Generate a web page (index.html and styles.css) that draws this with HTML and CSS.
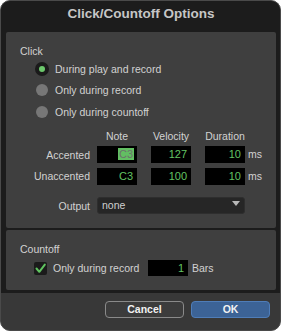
FILE: index.html
```html
<!DOCTYPE html>
<html lang="en">
<head>
  <meta charset="UTF-8" />
  <title>Click/Countoff Options</title>
  <link rel="stylesheet" href="styles.css">
</head>
<body>

  <div class="window">
    <div class="top">
      <div class="title">Click/Countoff Options</div>

      <!-- click section -->
      <section class="panel click-panel">
        <div class="section-label">Click</div>
        <div class="radios">
          <div class="radio-row">
            <span class="radio on"></span>
            <span>During play and record</span>
          </div>
          <div class="radio-row">
            <span class="radio"></span>
            <span>Only during record</span>
          </div>
          <div class="radio-row">
            <span class="radio"></span>
            <span>Only during countoff</span>
          </div>
        </div>

        <div class="note-grid">
          <span></span>
          <span class="col-head">Note</span>
          <span class="col-head">Velocity</span>
          <span class="col-head">Duration</span>
          <span></span>

          <span class="row-label">Accented</span>
          <span class="field"><span class="selected">C3</span></span>
          <span class="field">127</span>
          <span class="field">10</span>
          <span class="unit">ms</span>

          <span class="row-label">Unaccented</span>
          <span class="field">C3</span>
          <span class="field">100</span>
          <span class="field">10</span>
          <span class="unit">ms</span>
        </div>

        <div class="output-row">
          <span class="row-label">Output</span>
          <div class="select">
            <span>none</span>
            <span class="arrow"></span>
          </div>
        </div>
      </section>

      <!-- countoff section -->
      <section class="panel countoff-panel">
        <div class="section-label">Countoff</div>
        <div class="countoff-row">
          <span class="checkbox">
            <svg width="13" height="13" viewBox="0 0 13 13">
              <polyline points="2.5,6.5 5.3,9.8 10.8,2.6" fill="none" stroke="#5fc35f" stroke-width="2" stroke-linecap="round" stroke-linejoin="round"/>
            </svg>
          </span>
          <span class="check-text">Only during record</span>
          <span class="field">1</span>
          <span class="unit">Bars</span>
        </div>
      </section>
    </div>

    <div class="buttons">
      <button class="btn">Cancel</button>
      <button class="btn primary">OK</button>
    </div>
  </div>

</body>
</html>
```

FILE: styles.css
```css
body {
  margin: 0;
  background: #fff;
  font-family: 'Liberation Sans', Arial, sans-serif;
  font-size: 10.5px;
  color: #d2d2d2;
}
.window {
  width: 281px;
  height: 331px;
  box-sizing: border-box;
  border: 1px solid #4a4a4a;
  border-radius: 10px;
  background: #383838;
  overflow: hidden;
  display: flex;
  flex-direction: column;
}
.top {
  background: #1c1c1c;
  padding: 0 4px 3px 5px;
}
.title {
  height: 31px;
  line-height: 26px;
  text-align: center;
  font-weight: bold;
  font-size: 13.5px;
  color: #c6c6c6;
}
.panel {
  background: #3f3f3f;
  border-radius: 2px;
  padding: 12px 14px 14px;
}
.click-panel { margin-bottom: 2px; }
.section-label {
  line-height: 14px;
}
.radios {
  padding-left: 15px;
}
.radio-row {
  height: 21px;
  display: flex;
  align-items: center;
  gap: 6px;
}
.radio-row:nth-child(2) { height: 22px; }
.radio {
  width: 12px;
  height: 12px;
  border-radius: 50%;
  background: #777;
  margin: 0 1px;
}
.radio.on {
  width: 14px;
  height: 14px;
  margin: 0;
  background: #1a1a1a;
  display: flex;
  align-items: center;
  justify-content: center;
}
.radio.on::after {
  content: '';
  width: 6px;
  height: 6px;
  border-radius: 50%;
  background: #6cc86c;
}

/* note / velocity / duration table */
.note-grid {
  margin-top: 7px;
  display: grid;
  grid-template-columns: 77px 54px 54px 43px auto;
  grid-template-rows: 14px 17px 17px;
  row-gap: 3px;
  align-items: center;
}
.note-grid .field:nth-child(n+11),
.note-grid .row-label:nth-child(n+11),
.note-grid .unit:nth-child(n+11) { margin-top: 3px; }
.col-head {
  width: 40px;
  text-align: center;
  line-height: 14px;
}
.row-label {
  text-align: right;
  padding-right: 7px;
}
.field {
  width: 40px;
  height: 17px;
  box-sizing: border-box;
  background: #000;
  color: #63c463;
  text-align: right;
  padding-right: 4px;
  line-height: 17px;
  font-size: 11px;
}
.selected {
  display: inline-block;
  background: #62bf62;
  color: #6c736c;
  line-height: 12px;
  padding: 0 1px;
  margin-right: -1px;
}
.unit {
  line-height: 17px;
}

.output-row {
  margin-top: 14px;
  display: grid;
  grid-template-columns: 77px 148px;
  align-items: center;
}
.select {
  height: 17px;
  box-sizing: border-box;
  background: #262626;
  border: 1px solid #2e2e2e;
  border-radius: 3px;
  padding-left: 4px;
  line-height: 15px;
  color: #d0d0d0;
  position: relative;
}
.arrow {
  position: absolute;
  right: 4px;
  top: 3px;
  width: 0;
  height: 0;
  border-left: 4px solid transparent;
  border-right: 4px solid transparent;
  border-top: 5px solid #b8b8b8;
}

/* countoff */
.countoff-row {
  margin-top: 4px;
  padding-left: 14px;
  height: 16px;
  display: flex;
  align-items: center;
}
.checkbox {
  width: 13px;
  height: 13px;
  background: #1a1a1a;
  border-radius: 2px;
  display: flex;
}
.check-text {
  margin-left: 6px;
  width: 95px;
}
.countoff-row .field {
  height: 16px;
  line-height: 16px;
}
.countoff-row .unit {
  margin-left: 4px;
}

/* bottom buttons */
.buttons {
  flex: 1;
  display: flex;
  justify-content: flex-end;
  align-items: flex-start;
  gap: 7px;
  padding: 8px 10px 0 0;
}
.btn {
  width: 79px;
  height: 17px;
  box-sizing: border-box;
  border: 1px solid #8a8a8a;
  border-radius: 4px;
  background: #3c3c3c;
  color: #f2f2f2;
  font-family: 'Liberation Sans', Arial, sans-serif;
  font-weight: bold;
  font-size: 10.5px;
  padding: 0;
  line-height: 15px;
}
.btn.primary {
  background: #3c6396;
  border-color: #4f7db8;
}
```
